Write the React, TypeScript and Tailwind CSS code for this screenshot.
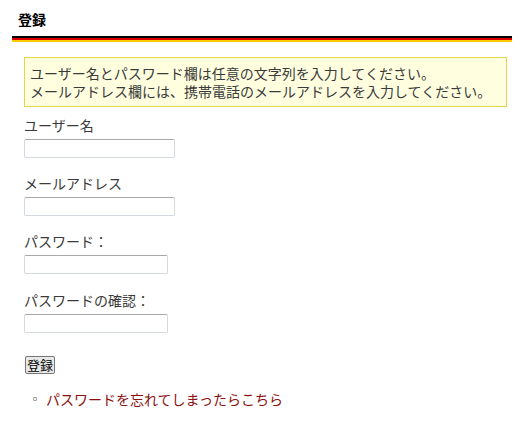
export default function App() {
  const fields = [
    { label: 'ユーザー名', type: 'text', width: 'w-[151px]', gap: 'mt-[8px]' },
    { label: 'メールアドレス', type: 'email', width: 'w-[151px]', gap: 'mt-[15px]' },
    { label: 'パスワード：', type: 'password', width: 'w-[144px]', gap: 'mt-[15px]' },
    { label: 'パスワードの確認：', type: 'password', width: 'w-[144px]', gap: 'mt-[16px]' },
  ];

  return (
    <div
      className="w-[521px] h-[444px] bg-white text-[#3a3a3a] text-[14px] leading-[18px]"
      style={{ fontFamily: '"Noto Sans CJK JP", "Noto Sans", sans-serif' }}
    >
      {/* Title */}
      <div className="pl-[18px] pt-[10px] h-[36px]">
        <h1 className="text-[14px] leading-[18px] font-bold text-black">登録</h1>
      </div>
      <div className="mx-[12px] w-[500px]">
        <div className="h-[2px] bg-black"></div>
        <div className="h-[2px] bg-[#dd0000]"></div>
        <div className="h-[2px] bg-[#ffcc00]"></div>
      </div>

      <div className="pl-[24px] pr-[14px]">
        {/* Notice */}
        <div className="mt-[15px] border border-[#e3d54e] bg-[#ffffe0] px-[5px] py-[6px] leading-[18px]">
          <p>ユーザー名とパスワード欄は任意の文字列を入力してください。</p>
          <p>メールアドレス欄には、携帯電話のメールアドレスを入力してください。</p>
        </div>

        {/* Form */}
        <form onSubmit={(e) => e.preventDefault()}>
          {fields.map((f) => (
            <div key={f.label} className={f.gap}>
              <label className="block leading-[20px]">{f.label}</label>
              <input
                type={f.type}
                className={`mt-[4px] block h-[19px] ${f.width} border border-[#d4d8e0] border-t-[#a9a9a9] rounded-[2px] bg-white outline-none`}
              />
            </div>
          ))}
          <button
            type="submit"
            className="mt-[23px] ml-[1px] block h-[18px] px-[1px] border border-[#767676] rounded-[2px] bg-[#e9e9e9] text-[13px] leading-[14px] text-black"
          >
            登録
          </button>
        </form>

        {/* Links */}
        <ul className="mt-[15px]">
          <li className="flex items-center leading-[20px]">
            <span className="w-[22px] pl-[5px] text-[12px] text-[#444]">◦</span>
            <a href="#" className="text-[#8b1010]">
              パスワードを忘れてしまったらこちら
            </a>
          </li>
        </ul>
      </div>
    </div>
  );
}
